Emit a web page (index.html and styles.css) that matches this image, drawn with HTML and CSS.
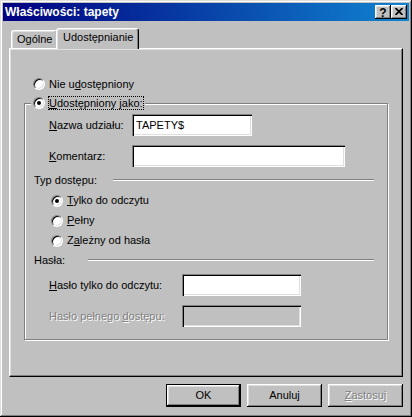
FILE: index.html
```html
<!DOCTYPE html>
<html lang="pl">
<head>
<meta charset="utf-8">
<title>Właściwości: tapety</title>
<link rel="stylesheet" href="styles.css">
</head>
<body>
<div class="window">
  <div class="titlebar">
    <span class="title">Właściwości: tapety</span>
    <div class="tb-buttons">
      <span class="tb-btn help">?</span>
      <span class="tb-btn close"><svg width="8" height="7" viewBox="0 0 8 7"><path d="M0.5 0 L7.5 7 M7.5 0 L0.5 7" stroke="#000" stroke-width="1.7" fill="none"/></svg></span>
    </div>
  </div>
  <div class="body">
    <div class="tabs">
      <div class="tab">Ogólne</div>
      <div class="tab active">Udostępnianie</div>
    </div>
    <div class="panel">
      <div class="opt opt-top"><span class="radio"></span><span class="lbl">Nie u<u>d</u>ostępniony</span></div>
      <div class="group">
        <div class="legend"><span class="radio checked"></span><span class="lbl focus"><u>U</u>dostępniony jako:</span></div>
        <div class="frow r-name"><span class="flabel w83"><u>N</u>azwa udziału:</span><div class="edit w120">TAPETY$</div></div>
        <div class="frow r-comment"><span class="flabel w83"><u>K</u>omentarz:</span><div class="edit w213"></div></div>
        <div class="sep r-type"><span>Typ dostępu:</span><span class="line w261"></span></div>
        <div class="opt sub r-first"><span class="radio checked"></span><span class="lbl"><u>T</u>ylko do odczytu</span></div>
        <div class="opt sub r-next"><span class="radio"></span><span class="lbl"><u>P</u>ełny</span></div>
        <div class="opt sub r-next"><span class="radio"></span><span class="lbl">Z<u>a</u>leżny od hasła</span></div>
        <div class="sep r-pass"><span>Hasła:</span><span class="line w286"></span></div>
        <div class="frow r-ro"><span class="flabel w133"><u>H</u>asło tylko do odczytu:</span><div class="edit w119"></div></div>
        <div class="frow r-full"><span class="flabel w133 disabled">Hasło pełnego <u>d</u>ostępu:</span><div class="edit w119 off"></div></div>
      </div>
    </div>
    <div class="buttons">
      <div class="btn default"><span>OK</span></div>
      <div class="btn"><span>Anuluj</span></div>
      <div class="btn"><span class="disabled"><u>Z</u>astosuj</span></div>
    </div>
  </div>
</div>
</body>
</html>
```
FILE: styles.css
```css
html, body {
  margin: 0;
  padding: 0;
  background: #c0c0c0;
}
body {
  font-family: "Liberation Sans", Arial, sans-serif;
  font-size: 11px;
  line-height: 13px;
  color: #000;
}
u { text-decoration: underline; text-underline-offset: 1px; }

.window {
  width: 412px;
  height: 417px;
  box-sizing: border-box;
  padding: 3px;
  background: #c0c0c0;
  box-shadow: inset -1px -1px #000, inset 1px 1px #dfdfdf, inset -2px -2px #808080, inset 2px 2px #fff;
}

.titlebar {
  height: 18px;
  display: flex;
  align-items: center;
  justify-content: space-between;
  padding: 0 2px 0 2px;
  background: linear-gradient(to right, #000080, #1084d0);
}
.title {
  color: #fff;
  font-weight: bold;
  font-size: 12px;
}
.tb-buttons { display: flex; }
.tb-btn {
  width: 16px;
  height: 14px;
  box-sizing: border-box;
  display: flex;
  align-items: center;
  justify-content: center;
  background: #c0c0c0;
  box-shadow: inset -1px -1px #000, inset 1px 1px #fff, inset -2px -2px #808080, inset 2px 2px #dfdfdf;
}
.help {
  font-weight: bold;
  font-size: 12px;
  line-height: 12px;
  padding-top: 1px;
}
.close svg { display: block; margin-top: -1px; }

.body {
  padding: 7px 6px 0 6px;
}

.tabs {
  height: 20px;
  display: flex;
  align-items: flex-end;
  padding-left: 2px;
}
.tab {
  box-sizing: border-box;
  height: 18px;
  width: 47px;
  padding: 2px 0 0 5px;
  border: 1px solid;
  border-bottom: none;
  border-color: #fff #000 transparent #fff;
  border-radius: 3px 3px 0 0;
  box-shadow: inset -1px 0 #808080, inset 1px 1px #dfdfdf;
  background: #c0c0c0;
  white-space: nowrap;
}
.tab.active {
  height: 21px;
  width: 83px;
  margin-left: -2px;
  margin-bottom: -1px;
  padding-left: 6px;
  position: relative;
  z-index: 1;
}

.panel {
  box-sizing: border-box;
  width: 394px;
  height: 329px;
  padding-top: 27px;
  border: 1px solid;
  border-color: #fff #000 #000 #fff;
  box-shadow: inset -1px -1px #808080, inset 1px 1px #dfdfdf;
}

.radio {
  width: 12px;
  height: 12px;
  flex: none;
  box-sizing: border-box;
  border-radius: 50%;
  background: #fff;
  border: 1px solid;
  border-color: #808080 #fff #fff #808080;
  box-shadow: inset 1px 1px #000, inset -1px -1px #dfdfdf;
  display: grid;
  place-items: center;
}
.radio.checked::after {
  content: "";
  width: 4px;
  height: 4px;
  border-radius: 50%;
  background: #000;
}

.opt {
  display: flex;
  align-items: center;
  gap: 4px;
  height: 16px;
  white-space: nowrap;
}
.opt-top { margin-left: 23px; }
.opt.sub { margin-left: 26px; height: 15px; }
.r-first { margin-top: 6px; }
.r-next { margin-top: 5px; }

.group {
  box-sizing: border-box;
  margin: 11px 0 0 14px;
  width: 364px;
  height: 237px;
  border: 1px solid #808080;
  box-shadow: 1px 1px 0 #fff, inset 1px 1px 0 #fff;
}
.legend {
  display: flex;
  align-items: center;
  gap: 3px;
  width: fit-content;
  height: 14px;
  margin: -8px 0 0 6px;
  padding: 0 1px 0 2px;
  background: #c0c0c0;
  white-space: nowrap;
}
.focus {
  border: 1px dotted #000;
  line-height: 12px;
  padding: 0;
}

.frow {
  display: flex;
  align-items: center;
  height: 22px;
  margin-left: 24px;
  white-space: nowrap;
}
.r-name { margin-top: 4px; }
.r-comment { margin-top: 9px; }
.r-ro { margin-top: 7px; }
.r-full { margin-top: 9px; }
.flabel { flex: none; }
.w83 { width: 83px; }
.w133 { width: 133px; }

.edit {
  box-sizing: border-box;
  height: 22px;
  flex: none;
  display: flex;
  align-items: center;
  padding-left: 4px;
  background: #fff;
  box-shadow: inset 1px 1px #808080, inset 2px 2px #000, inset -1px -1px #fff, inset -2px -2px #dfdfdf;
}
.edit.off { background: #c0c0c0; }
.w120 { width: 120px; }
.w213 { width: 213px; }
.w119 { width: 119px; }

.sep {
  display: flex;
  align-items: center;
  justify-content: space-between;
  width: 340px;
  height: 14px;
  margin-left: 9px;
  white-space: nowrap;
}
.r-type { margin-top: 6px; }
.r-pass { margin-top: 5px; }
.line {
  height: 0;
  border-top: 1px solid #808080;
  border-bottom: 1px solid #fff;
}
.w261 { width: 261px; }
.w286 { width: 286px; }

.disabled {
  color: #808080;
  text-shadow: 1px 1px 0 #fff;
}

.buttons {
  width: 394px;
  margin-top: 7px;
  display: flex;
  justify-content: flex-end;
  gap: 6px;
}
.btn {
  box-sizing: border-box;
  width: 75px;
  height: 23px;
  display: flex;
  align-items: center;
  justify-content: center;
  background: #c0c0c0;
  box-shadow: inset -1px -1px #000, inset 1px 1px #fff, inset -2px -2px #808080, inset 2px 2px #dfdfdf;
}
.btn.default {
  box-shadow: inset 0 0 0 1px #000, inset -2px -2px #000, inset 2px 2px #fff, inset -3px -3px #808080, inset 3px 3px #dfdfdf;
}
```
